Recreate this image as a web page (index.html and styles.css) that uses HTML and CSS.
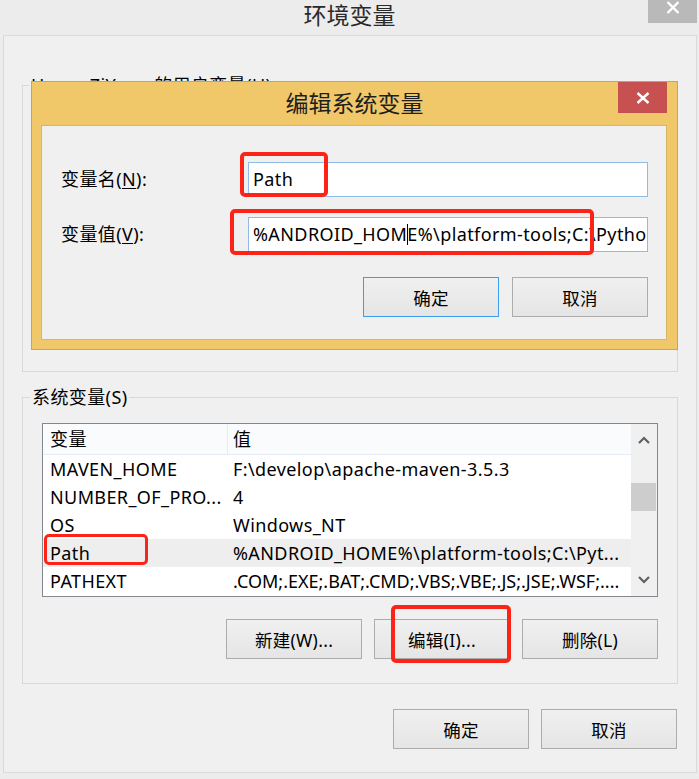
FILE: index.html
```html
<!DOCTYPE html>
<html lang="zh-CN">
<head>
<meta charset="utf-8">
<title>环境变量</title>
<link rel="stylesheet" href="styles.css">
</head>
<body>
<header class="titlebar">
  <span></span>
  <h1 class="title">环境变量</h1>
  <button class="close-gray" aria-label="关闭"><svg viewBox="0 0 14 13" width="14" height="13"><path d="M1.5 1 L12.5 12 M12.5 1 L1.5 12"/></svg></button>
</header>

<main class="window">
  <section class="group group-user">
    <div class="group-label label-user">HuangZiYuan 的用户变量(U)</div>
  </section>

  <section class="group group-sys">
    <div class="group-label label-sys">系统变量(S)</div>
    <div class="list">
      <div class="list-body">
        <div class="row head"><div class="c1">变量</div><div class="c2">值</div></div>
        <div class="row"><div class="c1">MAVEN_HOME</div><div class="c2">F:\develop\apache-maven-3.5.3</div></div>
        <div class="row"><div class="c1">NUMBER_OF_PRO...</div><div class="c2">4</div></div>
        <div class="row"><div class="c1">OS</div><div class="c2">Windows_NT</div></div>
        <div class="row sel"><div class="c1">Path</div><div class="c2">%ANDROID_HOME%\platform-tools;C:\Pyt...</div></div>
        <div class="row"><div class="c1">PATHEXT</div><div class="c2 tight">.COM;.EXE;.BAT;.CMD;.VBS;.VBE;.JS;.JSE;.WSF;....</div></div>
      </div>
      <div class="scrollbar">
        <div class="sb-btn"><svg viewBox="0 0 12 8" width="12" height="8"><path d="M1 7 L6 2 L11 7"/></svg></div>
        <div class="sb-track"><div class="sb-thumb"></div></div>
        <div class="sb-btn"><svg viewBox="0 0 12 8" width="12" height="8"><path d="M1 1 L6 6 L11 1"/></svg></div>
      </div>
    </div>
    <div class="btn-row">
      <button class="btn">新建(W)...</button>
      <button class="btn">编辑(I)...</button>
      <button class="btn">删除(L)</button>
    </div>
  </section>

  <div class="btn-row ok-row">
    <button class="btn">确定</button>
    <button class="btn">取消</button>
  </div>
</main>

<div class="dialog">
  <div class="dlg-title">
    <span></span>
    <h2>编辑系统变量</h2>
    <button class="close-red" aria-label="关闭"><svg viewBox="0 0 14 12" width="14" height="12"><path d="M1.5 1 L12.5 11 M12.5 1 L1.5 11"/></svg></button>
  </div>
  <div class="dlg-body">
    <div class="field-label">变量名(<u>N</u>):</div>
    <div class="input">Path</div>
    <div class="field-label">变量值(<u>V</u>):</div>
    <div class="input">%ANDROID_HOM<span class="caret"></span>E%\platform-tools;C:\Pytho</div>
    <div class="dlg-buttons">
      <button class="btn default">确定</button>
      <button class="btn">取消</button>
    </div>
  </div>
</div>

<div class="mark m1"></div>
<div class="mark m2"></div>
<div class="mark m3"></div>
<div class="mark m4"></div>
</body>
</html>
```

FILE: styles.css
```css
html, body {
  margin: 0;
  padding: 0;
}

body {
  position: relative;
  width: 699px;
  height: 779px;
  overflow: hidden;
  background: #ececec;
  font-family: "Noto Sans", "Noto Sans CJK SC", sans-serif;
  font-size: 18px;
  letter-spacing: 0.4px;
  color: #000;
}

/* outer window title */
.titlebar {
  display: grid;
  grid-template-columns: 1fr auto 1fr;
  height: 35px;
}

.title {
  margin: 0;
  font-size: 23px;
  font-weight: normal;
  letter-spacing: 0;
  line-height: 30px;
  color: #2a2a2a;
}

.close-gray {
  justify-self: end;
  align-self: start;
  margin-right: 2px;
  width: 49px;
  height: 23px;
  padding: 1px 0 0;
  border: 0;
  background: #b9b9b9;
  display: flex;
  justify-content: center;
  align-items: flex-start;
}

.close-gray path,
.close-red path {
  stroke: #fff;
  stroke-width: 2.4;
  fill: none;
}

/* window body */
.window {
  margin: 0 2px 0 3px;
  height: 738px;
  box-sizing: border-box;
  border: 1px solid #dadada;
  background: #f0f0f0;
  padding: 49px 18px 0;
}

.group {
  border: 1px solid #d9d9d9;
  padding: 0 19px;
}

.group-user {
  height: 287px;
  box-sizing: border-box;
}

.group-sys {
  margin-top: 25px;
  padding-bottom: 24px;
}

.group-label {
  display: block;
  width: max-content;
  margin-top: -11px;
  padding: 0 2px;
  line-height: 20px;
  background: #f0f0f0;
}

.label-user {
  margin-left: -13px;
}

.label-sys {
  margin-left: -12px;
}

/* list view */
.list {
  margin-top: 16px;
  height: 174px;
  box-sizing: border-box;
  border: 1px solid #828790;
  background: #fff;
  display: flex;
}

.list-body {
  flex: 1;
  min-width: 0;
}

.row {
  display: grid;
  grid-template-columns: 185px 1fr;
  height: 28px;
  line-height: 28px;
}

.row.head {
  height: 30px;
  line-height: 30px;
  background: #fafbfd;
  border-bottom: 1px solid #e5ecf5;
}

.row.head .c1 {
  border-right: 1px solid #e5ecf5;
}

.row.sel {
  background: #eeeeee;
}

.c1,
.c2 {
  white-space: nowrap;
  overflow: hidden;
}

.c1 {
  padding-left: 7px;
}

.c2 {
  padding-left: 5px;
}

.c2.tight {
  letter-spacing: 0;
}

.scrollbar {
  width: 26px;
  background: #f0f0f0;
  display: flex;
  flex-direction: column;
}

.sb-btn {
  height: 32px;
  display: flex;
  align-items: center;
  justify-content: center;
}

.sb-btn path {
  stroke: #606060;
  stroke-width: 2.2;
  fill: none;
}

.sb-track {
  flex: 1;
}

.sb-thumb {
  margin-top: 27px;
  margin-right: 1px;
  height: 28px;
  background: #cdcdcd;
}

/* buttons */
.btn-row {
  display: flex;
  justify-content: flex-end;
  gap: 12px;
  margin-top: 22px;
}

.ok-row {
  margin-top: 25px;
  margin-right: 1px;
}

.btn {
  width: 136px;
  height: 40px;
  box-sizing: border-box;
  border: 1px solid #acacac;
  background: linear-gradient(#f0f0f0, #e5e5e5);
  font-family: inherit;
  font-size: 17.5px;
  letter-spacing: 0.3px;
  color: #000;
  padding: 0;
}

.btn.default {
  border-color: #3d9bf0;
}

/* edit dialog */
.dialog {
  position: absolute;
  left: 31px;
  top: 81px;
  width: 647px;
  height: 269px;
  box-sizing: border-box;
  border: 1px solid #c9a452;
  background: #f0c869;
  display: flex;
  flex-direction: column;
}

.dlg-title {
  flex: none;
  height: 43px;
  display: grid;
  grid-template-columns: 1fr auto 1fr;
}

.dlg-title h2 {
  margin: 0;
  font-size: 23px;
  font-weight: normal;
  letter-spacing: 0;
  line-height: 43px;
  color: #1e1e1e;
}

.close-red {
  justify-self: end;
  align-self: start;
  margin-right: 10px;
  width: 49px;
  height: 31px;
  padding: 0;
  border: 0;
  background: #c75050;
  display: flex;
  align-items: center;
  justify-content: center;
}

.dlg-body {
  flex: 1;
  margin: 0 10px 9px 9px;
  border: 1px solid #d7b765;
  background: #f0f0f0;
  padding: 36px 18px 0 19px;
  display: grid;
  grid-template-columns: 1fr 400px;
  row-gap: 20px;
  align-content: start;
}

.field-label {
  line-height: 35px;
}

.field-label u {
  text-underline-offset: 2px;
}

.input {
  height: 35px;
  box-sizing: border-box;
  border: 1px solid #8fbbe9;
  background: #fff;
  padding-left: 4px;
  line-height: 33px;
  white-space: nowrap;
  overflow: hidden;
}

.caret {
  display: inline-block;
  width: 1px;
  height: 21px;
  margin-right: -1px;
  background: #000;
  vertical-align: -4px;
}

.dlg-buttons {
  grid-column: 1 / -1;
  display: flex;
  justify-content: flex-end;
  gap: 13px;
  margin-top: 5px;
}

/* red annotation boxes */
.mark {
  position: absolute;
  box-sizing: border-box;
  border: 4px solid #fe2317;
  border-radius: 5px;
}

.m1 { left: 240px; top: 152px; width: 88px; height: 45px; }
.m2 { left: 230px; top: 209px; width: 364px; height: 46px; }
.m3 { left: 44px; top: 534px; width: 104px; height: 31px; border-width: 3.5px; }
.m4 { left: 391px; top: 605px; width: 120px; height: 58px; }
```
